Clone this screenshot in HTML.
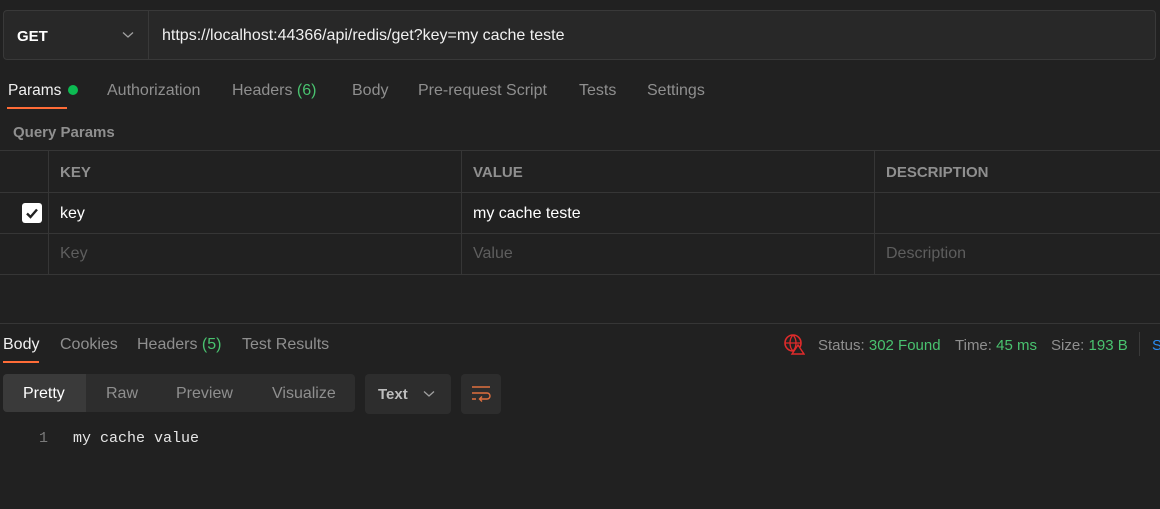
<!DOCTYPE html>
<html><head><style>
*{margin:0;padding:0;box-sizing:border-box}
body{width:1160px;height:509px;background:#212121;font-family:"Liberation Sans",sans-serif;color:#e6e6e6;position:relative;overflow:hidden;font-size:15px}
.a{position:absolute;white-space:nowrap}
.g{color:#8f8f8f}
.gr{color:#49c26f}
.t{font-size:16px}
</style></head><body>
<div class="a" style="left:3px;top:10px;width:1153px;height:50px;background:#282828;border:1px solid #393939;border-radius:4px"></div>
<div class="a" style="left:148px;top:11px;width:1px;height:48px;background:#393939"></div>
<div class="a" style="left:17px;top:28px;font-weight:bold;font-size:15px;color:#fff">GET</div>
<svg class="a" style="left:122px;top:31px" width="12" height="8"><path d="M1 1.5 L6 6 L11 1.5" stroke="#a0a0a0" stroke-width="1.3" fill="none"/></svg>
<div class="a t" style="left:162px;top:27px;color:#f0f0f0">https://localhost:44366/api/redis/get?key=my cache teste</div>

<div class="a" style="left:8px;top:82px;color:#f0f0f0;font-size:15.5px">Params</div>
<div class="a" style="left:68px;top:85px;width:10px;height:10px;border-radius:50%;background:#0cbb52"></div>
<div class="a" style="left:7px;top:107px;width:60px;height:2px;background:#ff6c37"></div>
<div class="a g t" style="left:107px;top:82px">Authorization</div>
<div class="a g t" style="left:232px;top:82px">Headers <span class="gr">(6)</span></div>
<div class="a g t" style="left:352px;top:82px">Body</div>
<div class="a g t" style="left:418px;top:82px">Pre-request Script</div>
<div class="a g t" style="left:579px;top:82px">Tests</div>
<div class="a g t" style="left:647px;top:82px">Settings</div>
<div class="a g" style="left:13px;top:124px;font-weight:bold;font-size:15px">Query Params</div>

<div class="a" style="left:0;top:150px;width:1160px;height:1px;background:#363636"></div>
<div class="a" style="left:0;top:192px;width:1160px;height:1px;background:#363636"></div>
<div class="a" style="left:0;top:233px;width:1160px;height:1px;background:#363636"></div>
<div class="a" style="left:0;top:274px;width:1160px;height:1px;background:#363636"></div>
<div class="a" style="left:48px;top:151px;width:1px;height:123px;background:#363636"></div>
<div class="a" style="left:461px;top:151px;width:1px;height:123px;background:#363636"></div>
<div class="a" style="left:874px;top:151px;width:1px;height:123px;background:#363636"></div>
<div class="a g" style="left:60px;top:164px;font-weight:bold">KEY</div>
<div class="a g" style="left:473px;top:164px;font-weight:bold">VALUE</div>
<div class="a g" style="left:886px;top:164px;font-weight:bold">DESCRIPTION</div>
<div class="a" style="left:22px;top:203px;width:20px;height:20px;background:#fff;border-radius:3px"></div>
<svg class="a" style="left:22px;top:203px" width="20" height="20"><path d="M5 10.5 L8.5 14 L15 6.5" stroke="#212121" stroke-width="2.4" fill="none"/></svg>
<div class="a t" style="left:60px;top:205px;color:#fff">key</div>
<div class="a t" style="left:473px;top:205px;color:#fff">my cache teste</div>
<div class="a t" style="left:60px;top:245px;color:#5e5e5e">Key</div>
<div class="a t" style="left:473px;top:245px;color:#5e5e5e">Value</div>
<div class="a t" style="left:886px;top:245px;color:#5e5e5e">Description</div>

<div class="a" style="left:0;top:323px;width:1160px;height:1px;background:#363636"></div>
<div class="a t" style="left:3px;top:336px;color:#f0f0f0">Body</div>
<div class="a" style="left:3px;top:361px;width:36px;height:2px;background:#ff6c37"></div>
<div class="a g t" style="left:60px;top:336px">Cookies</div>
<div class="a g t" style="left:137px;top:336px">Headers <span class="gr">(5)</span></div>
<div class="a g t" style="left:242px;top:336px">Test Results</div>
<svg class="a" style="left:783px;top:333px" width="22" height="22"><circle cx="10" cy="10" r="8" stroke="#e02b2b" stroke-width="1.6" fill="none"/><path d="M2 10H18M10 2C6 6 6 14 10 18M10 2C14 6 14 14 10 18" stroke="#e02b2b" stroke-width="1.3" fill="none"/><path d="M15 12L21 21H9Z" fill="#212121" stroke="#e02b2b" stroke-width="1.4"/></svg>
<div class="a g" style="left:818px;top:337px">Status: <span class="gr">302 Found</span></div>
<div class="a g" style="left:955px;top:337px">Time: <span class="gr">45 ms</span></div>
<div class="a g" style="left:1051px;top:337px">Size: <span class="gr">193 B</span></div>
<div class="a" style="left:1139px;top:332px;width:1px;height:24px;background:#3a3a3a"></div>
<div class="a" style="left:1152px;top:337px;color:#2a8cf3">S</div>

<div class="a" style="left:3px;top:374px;width:352px;height:38px;background:#2d2d2d;border-radius:4px"></div>
<div class="a" style="left:3px;top:374px;width:83px;height:38px;background:#3a3a3a;border-radius:4px 0 0 4px"></div>
<div class="a t" style="left:23px;top:385px;color:#fff">Pretty</div>
<div class="a g t" style="left:106px;top:385px">Raw</div>
<div class="a g t" style="left:176px;top:385px">Preview</div>
<div class="a g t" style="left:272px;top:385px">Visualize</div>
<div class="a" style="left:365px;top:374px;width:86px;height:40px;background:#2d2d2d;border-radius:4px"></div>
<div class="a" style="left:378px;top:386px;font-weight:bold;color:#bdbdbd">Text</div>
<svg class="a" style="left:423px;top:390px" width="12" height="8"><path d="M1 1.5 L6 6 L11 1.5" stroke="#a0a0a0" stroke-width="1.3" fill="none"/></svg>
<div class="a" style="left:461px;top:374px;width:40px;height:40px;background:#2d2d2d;border-radius:4px"></div>
<svg class="a" style="left:471px;top:384px" width="20" height="20"><path d="M1 3H19M1 9H16A3 3 0 0 1 16 15H9M11 12.5L8.5 15L11 17.5M1 15H5" stroke="#e0703f" stroke-width="1.4" fill="none"/></svg>
<div class="a" style="left:39px;top:430px;font-family:'Liberation Mono',monospace;font-size:15px;color:#7a7a7a">1</div>
<div class="a" style="left:73px;top:430px;font-family:'Liberation Mono',monospace;font-size:15px;color:#e6e6e6">my cache value</div>
</body></html>
